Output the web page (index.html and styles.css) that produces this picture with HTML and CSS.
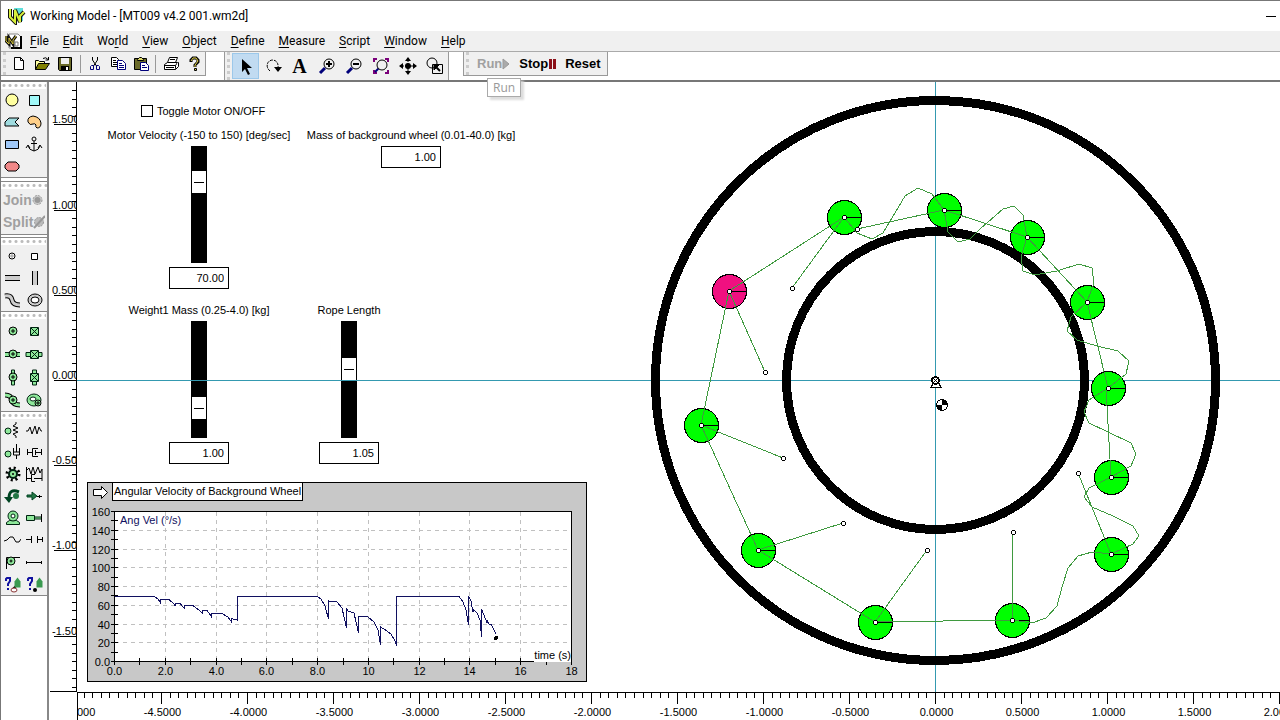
FILE: index.html
```html
<!DOCTYPE html>
<html lang="en">
<head>
  <meta charset="UTF-8">
  <meta name="viewport" content="width=device-width, initial-scale=1.0">
  <title>Working Model - [MT009 v4.2 001.wm2d]</title>
  <link rel="stylesheet" href="styles.css">
</head>
<body>
  <header class="titlebar">
    <svg class="logo" width="18" height="18" viewBox="0 0 18 18">
      <path d="M6 1h9v13H8z" fill="#5fe0dc"/>
      <path d="M2 2v8l5 5V3l5 12V9l4-4" fill="none" stroke="#111" stroke-width="4"/>
      <path d="M2 2v8l5 5V3l5 12V9l4-4" fill="none" stroke="#d8f03c" stroke-width="2"/>
    </svg>
    <h1>Working Model - [MT009 v4.2 001.wm2d]</h1>
    <button class="minimize" aria-label="Minimize"></button>
  </header>

  <nav class="menubar">
    <svg class="doc-icon" width="18" height="18" viewBox="0 0 18 18">
      <path d="M4 2h9l3 3v11H4z" fill="#fff" stroke="#888"/>
      <path d="M16 4v12H6" fill="none" stroke="#000" stroke-width="2"/>
      <path d="M1 4v5l3 3V6l4 6V8l3-4" fill="none" stroke="#111" stroke-width="3"/>
      <path d="M1 4v5l3 3V6l4 6V8l3-4" fill="none" stroke="#d8c93c"/>
      <path d="M10 10h3v4h-3z" fill="none" stroke="#777"/>
    </svg>
    <a href="#"><u>F</u>ile</a>
    <a href="#"><u>E</u>dit</a>
    <a href="#">Wo<u>r</u>ld</a>
    <a href="#"><u>V</u>iew</a>
    <a href="#"><u>O</u>bject</a>
    <a href="#"><u>D</u>efine</a>
    <a href="#"><u>M</u>easure</a>
    <a href="#"><u>S</u>cript</a>
    <a href="#"><u>W</u>indow</a>
    <a href="#"><u>H</u>elp</a>
  </nav>

  <div class="toolbars">
    <div class="toolbar file-tools">
      <span class="grip"></span>
      <button aria-label="New"><svg width="16" height="16" viewBox="0 0 16 16"><path d="M3.500 1.500h6l3 3v9h-9zM9.500 1.500v3h3" fill="#fff" stroke="#000"/></svg></button>
      <button aria-label="Open"><svg width="16" height="16" viewBox="0 0 16 16"><path d="M1.500 13.500v-9h3l1 1h5v2" fill="#ffffa0" stroke="#000"/><path d="M1.500 13.500l3-6h11l-4 6z" fill="#808000" stroke="#000"/><path d="M9 2.500q3-2 5 1M14.500 1v3h-3" fill="none" stroke="#000"/></svg></button>
      <button aria-label="Save"><svg width="16" height="16" viewBox="0 0 16 16"><path d="M1.500 1.500h13v13h-12l-1-1z" fill="#6b6b2a" stroke="#000"/><path d="M4 2h8v6H4z" fill="#eee"/><path d="M4 10h8v4H4z" fill="#000"/><path d="M9 11h2v3H9z" fill="#fff"/></svg></button>
      <span class="divider"></span>
      <button aria-label="Cut"><svg width="16" height="16" viewBox="0 0 16 16" fill="none"><path d="M5.500 1v3l4 6M10.500 1v3l-4 6" stroke="#000"/><path d="M4.500 9.500h2v4h-3v-3zM9.500 9.500h2l1 1v3h-3z" stroke="#00007a"/></svg></button>
      <button aria-label="Copy"><svg width="16" height="16" viewBox="0 0 16 16"><path d="M1.500 1.500h5l2 2v7h-7z" fill="#fff" stroke="#000"/><path d="M3 4.500h3M3 6.500h4M3 8.500h4" stroke="#000"/><path d="M7.500 4.500h5l3 3v6h-8z" fill="#fff" stroke="#00007a"/><path d="M9 7.500h3M9 9.500h5M9 11.500h5" stroke="#00007a"/></svg></button>
      <button aria-label="Paste"><svg width="16" height="16" viewBox="0 0 16 16"><path d="M1.500 2.500h12v11h-12z" fill="#6b6b2a" stroke="#000"/><path d="M4.500 3.500l2-2h2l2 2v1h-6z" fill="#ddd96a" stroke="#000"/><path d="M7.500 6.500h5l3 3v5h-8z" fill="#fff" stroke="#00007a"/><path d="M9 9.500h3M9 11.500h5" stroke="#00007a"/></svg></button>
      <span class="divider"></span>
      <button aria-label="Print"><svg width="16" height="16" viewBox="0 0 16 16" fill="#fff" stroke="#000"><path d="M4.500 6.500l2-5h8l-2 5z"/><path d="M1.500 8.500l3-2h10l-2 3v4h-11z"/><path d="M12.500 13.500l3-3v-4h-1M1.500 9.500h11M3 11.500h8M7 3.500h5"/></svg></button>
      <button aria-label="Help"><svg width="16" height="16" viewBox="0 0 16 16" fill="none"><path d="M5 6V4l2-2h3l2 2v2L9 9v2" stroke="#000" stroke-width="3"/><path d="M5 5l2-3h3l2 3-3 4v2" stroke="#e8d84c"/><path d="M8.500 12.500h2v2h-2z" fill="#e8d84c" stroke="#000"/></svg></button>
    </div>

    <div class="toolbar edit-tools">
      <span class="grip"></span>
      <button class="active" aria-label="Select"><svg width="20" height="20" viewBox="0 0 20 20"><path d="M6 3v13l3-3 3 6 2-1-3-6h5z" fill="#000"/></svg></button>
      <button aria-label="Rotate"><svg width="20" height="20" viewBox="0 0 20 20"><path d="M7 15C2 11 4 4 10 4q6 1 5 9" fill="none" stroke="#000" stroke-dasharray="3 1"/><path d="M11 11h8l-4 5z" fill="#000"/></svg></button>
      <button class="text-tool" aria-label="Text">A</button>
      <button aria-label="Zoom in"><svg width="20" height="20" viewBox="0 0 20 20"><path d="M3 17l5-5" stroke="#00007a" stroke-width="3"/><circle cx="12" cy="8" r="5" fill="#f0f0f0" stroke="#000"/><path d="M9 8h6M12 5v6" stroke="#000" stroke-width="2"/></svg></button>
      <button aria-label="Zoom out"><svg width="20" height="20" viewBox="0 0 20 20"><path d="M3 17l5-5" stroke="#00007a" stroke-width="3"/><circle cx="12" cy="8" r="5" fill="#f0f0f0" stroke="#000"/><path d="M9 8h6" stroke="#000" stroke-width="2"/></svg></button>
      <button aria-label="Zoom to extent"><svg width="20" height="20" viewBox="0 0 20 20"><path d="M3 6V3h3M14 3h3v3M17 14v3h-3M6 17H3v-3" fill="none" stroke="#7a007a" stroke-width="2"/><path d="M4 16l4-4" stroke="#00007a" stroke-width="2"/><circle cx="11" cy="9" r="5" fill="#f0f0f0" stroke="#000"/></svg></button>
      <button aria-label="Pan"><svg width="20" height="20" viewBox="0 0 20 20"><circle cx="10" cy="10" r="3"/><path d="M10 1l3 4H7zM10 19l3-4H7zM1 10l4-3v6zM19 10l-4-3v6z"/><path d="M2 10h16M10 2v16" stroke="#000" stroke-dasharray="4 1"/></svg></button>
      <button aria-label="Objects"><svg width="20" height="20" viewBox="0 0 20 20" fill="none" stroke="#000"><circle cx="7" cy="7" r="5"/><path d="M7.500 8.500h10v9h-10z"/><path d="M10 10l5 5" stroke-width="2"/><path d="M9 9h5l-5 5z" fill="#000"/></svg></button>
    </div>

    <div class="toolbar run-tools">
      <span class="grip"></span>
      <button class="run" disabled>Run<svg width="9" height="12" viewBox="0 0 9 12"><path d="M1 1l6 5-6 5z" fill="#aaa" stroke="#999"/></svg></button>
      <button>Stop<svg width="9" height="12" viewBox="0 0 9 12"><path d="M1 1h3v10H1zM5 1h3v10H5z" fill="#8c1018"/></svg></button>
      <button>Reset</button>
      <span class="tooltip">Run</span>
    </div>
  </div>

  <div class="main">
    <aside class="toolbox">
      <section class="tools bodies">
        <button aria-label="Circle"><svg width="18" height="18" viewBox="0 0 18 18"><circle cx="9" cy="9" r="6" fill="#ffffa0" stroke="#000"/></svg></button>
        <button aria-label="Square"><svg width="18" height="18" viewBox="0 0 18 18"><path d="M4.500 4.500h10v10h-10z" fill="#a0f8f8" stroke="#000"/></svg></button>
        <button aria-label="Polygon"><svg width="18" height="18" viewBox="0 0 18 18"><path d="M2 13V9l4-4h10l-4 4 4 4z" fill="#a0dce0" stroke="#000"/></svg></button>
        <button aria-label="Curved body"><svg width="18" height="18" viewBox="0 0 18 18"><path d="M3 9q-1-5 5-6 7 1 8 7 0 5-4 5-2-1-1-3-1-2-3-1-3 2-5-2z" fill="#ffd08a" stroke="#000"/></svg></button>
        <button aria-label="Rectangle"><svg width="18" height="18" viewBox="0 0 18 18"><path d="M2.500 5.500h13v8h-13z" fill="#a0c8f8" stroke="#000"/></svg></button>
        <button aria-label="Anchor"><svg width="18" height="18" viewBox="0 0 18 18" fill="none" stroke="#000"><circle cx="9" cy="4" r="2"/><path d="M9 6v10M6 8.500h6M3 11q1 4 6 5 5-1 6-5M1 13l2-3 2 3M13 13l2-3 2 3"/></svg></button>
        <button aria-label="Rounded body"><svg width="18" height="18" viewBox="0 0 18 18"><path d="M5 5h8l3 3v3l-3 3H5l-3-3V8z" fill="#f08888" stroke="#000"/></svg></button>
      </section>

      <section class="join-split">
        <button disabled>Join<svg width="11" height="12" viewBox="0 0 11 12"><circle cx="5.500" cy="6" r="4.500" fill="#ccc" stroke="#999" stroke-dasharray="2 1"/><circle cx="5.500" cy="6" r="3" fill="#999"/></svg></button>
        <button disabled>Split<svg width="12" height="14" viewBox="0 0 12 14"><circle cx="6" cy="7" r="4.500" fill="#bbb" stroke="#999" stroke-dasharray="2 1"/><path d="M1 13L12 1" stroke="#999" stroke-width="2"/></svg></button>
      </section>

      <section class="tools points">
        <button aria-label="Point"><svg width="18" height="18" viewBox="0 0 18 18"><circle cx="9" cy="9" r="3" fill="#fff" stroke="#000"/><path d="M7 9h4M9 7v4" stroke="#999"/></svg></button>
        <button aria-label="Square point"><svg width="18" height="18" viewBox="0 0 18 18"><path d="M6.500 6.500h6v6h-6z" fill="#fff" stroke="#000"/></svg></button>
        <button aria-label="Horizontal slot"><svg width="18" height="18" viewBox="0 0 18 18"><path d="M2 7h15v4H2z" fill="#ccc"/><path d="M2 6.500h15M2 11.500h15" stroke="#000"/></svg></button>
        <button aria-label="Vertical slot"><svg width="18" height="18" viewBox="0 0 18 18"><path d="M8 2h4v14H8z" fill="#ccc"/><path d="M7.500 2v14M12.500 2v14" stroke="#000"/></svg></button>
        <button aria-label="Curved slot"><svg width="18" height="18" viewBox="0 0 18 18" fill="none"><path d="M2 5q6-1 7 4 1 5 8 5" stroke="#000" stroke-width="5"/><path d="M2 5q6-1 7 4 1 5 8 5" stroke="#ccc" stroke-width="3"/></svg></button>
        <button aria-label="Closed slot"><svg width="18" height="18" viewBox="0 0 18 18"><ellipse cx="10" cy="9" rx="7" ry="6" fill="#ccc" stroke="#000"/><ellipse cx="10" cy="9" rx="4" ry="3" fill="#fff" stroke="#000"/></svg></button>
      </section>

      <section class="tools joints">
        <button aria-label="Pin joint"><svg width="18" height="18" viewBox="0 0 18 18"><circle cx="10" cy="9" r="4" fill="#8ee89a" stroke="#000"/><path d="M8 9h4M10 7v4" stroke="#000"/></svg></button>
        <button aria-label="Rigid joint"><svg width="18" height="18" viewBox="0 0 18 18"><path d="M5.500 5.500h8v8h-8zM6 6l7 7M13 6l-7 7" fill="#8ee89a" stroke="#021"/></svg></button>
        <button aria-label="Horizontal slot joint"><svg width="18" height="18" viewBox="0 0 18 18"><path d="M2 7.500h15M2 11.500h15" stroke="#021"/><path d="M2 8h15v3H2z" fill="#8ee89a"/><circle cx="10" cy="9" r="4" fill="#8ee89a" stroke="#000"/><path d="M8 9h4M10 7v4" stroke="#000"/></svg></button>
        <button aria-label="Keyed horizontal slot"><svg width="18" height="18" viewBox="0 0 18 18"><path d="M1 7.500h16v4H1z" fill="#8ee89a" stroke="#021"/><path d="M5.500 5.500h8v8h-8zM6 6l7 7M13 6l-7 7" fill="#8ee89a" stroke="#021"/></svg></button>
        <button aria-label="Vertical slot joint"><svg width="18" height="18" viewBox="0 0 18 18"><path d="M8.500 2v15h3V2z" fill="#8ee89a" stroke="#021"/><circle cx="10" cy="9" r="4" fill="#8ee89a" stroke="#000"/><path d="M8 9h4M10 7v4" stroke="#000"/></svg></button>
        <button aria-label="Keyed vertical slot"><svg width="18" height="18" viewBox="0 0 18 18"><path d="M7.500 2h4v15h-4z" fill="#8ee89a" stroke="#021"/><path d="M5.500 5.500h8v8h-8zM6 6l7 7M13 6l-7 7" fill="#8ee89a" stroke="#021"/></svg></button>
        <button aria-label="Curved slot joint"><svg width="18" height="18" viewBox="0 0 18 18" fill="none"><path d="M2 4q6 0 7 5 1 5 8 5" stroke="#000" stroke-width="5"/><path d="M2 4q6 0 7 5 1 5 8 5" stroke="#8ee89a" stroke-width="3"/><circle cx="10" cy="9" r="4" fill="#8ee89a" stroke="#000"/><path d="M8 9h4M10 7v4" stroke="#000"/></svg></button>
        <button aria-label="Closed slot joint"><svg width="18" height="18" viewBox="0 0 18 18"><ellipse cx="9" cy="9" rx="7" ry="6" fill="#8ee89a" stroke="#021"/><ellipse cx="8" cy="8" rx="3" ry="2" fill="#fff" stroke="#021"/><circle cx="13" cy="12" r="3" fill="#8ee89a" stroke="#000"/><path d="M11 12h4M13 10v4" stroke="#000"/></svg></button>
      </section>

      <section class="tools constraints">
        <button aria-label="Rotational spring"><svg width="18" height="18" viewBox="0 0 18 18" fill="none" stroke="#000"><circle cx="5" cy="10" r="3" fill="#8ee89a" stroke="#021"/><path d="M13 1v2l-3 2 5 2-5 2 5 2-5 2 3 2v2"/></svg></button>
        <button aria-label="Spring"><svg width="18" height="18" viewBox="0 0 18 18" fill="none" stroke="#000"><path d="M1 10h2l2-4 2 7 3-8 2 8 2-7 2 4h1"/></svg></button>
        <button aria-label="Rotational damper"><svg width="18" height="18" viewBox="0 0 18 18" fill="none" stroke="#000"><circle cx="5" cy="11" r="3" fill="#8ee89a" stroke="#021"/><path d="M13.500 1v8M11 9h5M10.500 5v7h6V5M13.500 12v4"/></svg></button>
        <button aria-label="Damper"><svg width="18" height="18" viewBox="0 0 18 18" fill="none" stroke="#000"><path d="M2.500 6v6M2 9.500h5M13 5.500H7.500v8H13M10.500 7v5M10 9.500h6M16.500 6v6"/></svg></button>
        <button aria-label="Gear"><svg width="18" height="18" viewBox="0 0 18 18"><circle cx="10" cy="9" r="6" fill="none" stroke="#000" stroke-width="3" stroke-dasharray="2 2.700"/><circle cx="10" cy="9" r="4" fill="#8ee89a" stroke="#021" stroke-width="2"/><circle cx="10" cy="9" r="1"/></svg></button>
        <button aria-label="Spring damper"><svg width="18" height="18" viewBox="0 0 18 18" fill="none" stroke="#000"><path d="M1.500 2v14M1 6l3-3 2 6 2-7 2 7 3-7 2 6 2-4v12M2 13.500h4M10 9.500H6.500v7H10M9 13.500h8"/></svg></button>
        <button aria-label="Torque"><svg width="18" height="18" viewBox="0 0 18 18"><path d="M16 5Q6 1 6 11" fill="none" stroke="#042" stroke-width="3"/><path d="M1 10h9l-4 6z" fill="#042"/><circle cx="13" cy="9" r="3" fill="#274"/></svg></button>
        <button aria-label="Force"><svg width="18" height="18" viewBox="0 0 18 18"><path d="M2 8h5V5l5 4-5 4v-3H2z" fill="#274" stroke="#042"/><path d="M12 9.500h5M14.500 8v3" stroke="#000"/></svg></button>
        <button aria-label="Motor"><svg width="18" height="18" viewBox="0 0 18 18"><path d="M3.500 15.500v-2l3-2h7l3 2v2z" fill="#8ee89a" stroke="#021"/><circle cx="10" cy="7" r="5" fill="#8ee89a" stroke="#021"/><circle cx="10" cy="7" r="2" fill="#fff" stroke="#021"/></svg></button>
        <button aria-label="Actuator"><svg width="18" height="18" viewBox="0 0 18 18"><path d="M1.500 6.500h8v5h-8zM9.500 8h7v2h-7z" fill="#8ee89a" stroke="#021"/><path d="M16.500 5v8" stroke="#000"/></svg></button>
        <button aria-label="Rope"><svg width="18" height="18" viewBox="0 0 18 18" fill="none" stroke="#000"><path d="M1 10l3-1 3-3h3l3 5h3l2-3"/></svg></button>
        <button aria-label="Separator"><svg width="18" height="18" viewBox="0 0 18 18" fill="none" stroke="#000"><path d="M1 8.500h5M6.500 5v7M12.500 5v7M12 8.500h5M17.500 6v5"/></svg></button>
        <button aria-label="Pulley"><svg width="18" height="18" viewBox="0 0 18 18" fill="none" stroke="#000"><path d="M3.500 16V4.500H17"/><circle cx="8" cy="8" r="4" fill="#8ee89a"/><circle cx="8" cy="8" r="1"/></svg></button>
        <button aria-label="Rod"><svg width="18" height="18" viewBox="0 0 18 18" fill="none" stroke="#000"><path d="M1 9.500h16M1.500 8v3M16.500 8v3"/></svg></button>
        <button aria-label="Time control"><svg width="18" height="18" viewBox="0 0 18 18"><path d="M3 6V4l1-1h3v3L5 9v2M5 13v2" fill="none" stroke="#1010a0" stroke-width="2"/><path d="M10 14l5-5" stroke="#000" stroke-width="2"/><path d="M11.500 6.500l3-4 3 4v6h-6z" fill="#3a9a50"/><ellipse cx="11" cy="15" rx="3" ry="2" fill="#fff" stroke="#833"/></svg></button>
        <button aria-label="Point control"><svg width="18" height="18" viewBox="0 0 18 18"><path d="M3 6V4l1-1h3v3L5 9v2M5 13v2" fill="none" stroke="#1010a0" stroke-width="2"/><path d="M11.500 6.500l3-4 3 4v6h-6z" fill="#3a9a50"/><circle cx="10" cy="15" r="2"/></svg></button>
      </section>
    </aside>

    <div class="document">
      <svg class="ruler-y" id="rulerY"></svg>
      <div class="canvas">
        <label class="toggle"><input type="checkbox">Toggle Motor ON/OFF</label>

        <div class="control motor">
          <label for="motor">Motor Velocity (-150 to 150) [deg/sec]</label>
          <input type="range" id="motor" min="-150" max="150" value="70">
          <input type="text" aria-label="Motor velocity value" value="70.00">
        </div>
        <div class="control wheel-mass">
          <label for="wheelMass">Mass of background wheel (0.01-40.0) [kg]</label>
          <input type="text" id="wheelMass" value="1.00">
        </div>
        <div class="control weight">
          <label for="weight">Weight1 Mass (0.25-4.0) [kg]</label>
          <input type="range" id="weight" min="0.25" max="4" step="0.01" value="1">
          <input type="text" aria-label="Weight value" value="1.00">
        </div>
        <div class="control rope">
          <label for="rope">Rope Length</label>
          <input type="range" id="rope" min="0.05" max="1.7" step="0.01" value="1.05">
          <input type="text" aria-label="Rope length value" value="1.05">
        </div>

        <div class="graph">
          <div class="graph-head">
            <svg width="18" height="14" viewBox="0 0 18 14"><path d="M1.500 4.500h8v-3l6 6-6 6v-3h-8z" fill="#fff" stroke="#000"/></svg>
            <h2>Angular Velocity of Background Wheel</h2>
          </div>
          <svg id="plot" width="498" height="180" viewBox="88 501 498 180">
            <rect x="114.500" y="511.500" width="457" height="150" fill="#fff" stroke="#000"/>
            <g id="plotGrid"></g>
            <path class="curve" d="M115 596.500H154L158 599L160 602V599.500H169L174 604L175 606V603.500H180L184 608V605.500H193L200 611L202 613V610.500H207L211 616V613L222 613.500L228 617L231 621V618.500L237.500 620V596.500H317L321 599L325 606L328.500 619V601L337 602L342 608L346.500 628V609L348 611L354 613L358.500 633V616H367L374 622L378 630L380.500 645V627L384 629L391 634L395 641L396.500 646V596.500H459L463 602L466 610L468.500 625V596L471 601L473 612V609L477 613L480 620L481.500 637V609L484 615L487 623V620L489 624H491L496 634"/>
            <circle cx="496" cy="638" r="2"/>
            <text class="series" x="120" y="524">Ang Vel (°/s)</text>
            <rect x="534" y="649" width="37" height="13" fill="#fff"/>
            <text class="unit" x="571" y="659">time (s)</text>
          </svg>
        </div>

        <svg class="scene" width="1203" height="610" viewBox="77 82 1203 610">
          <path class="axes" d="M77 380.500H4000M935.500 82V4000"/>
          <circle class="wheel" cx="935.500" cy="380.500" r="280"/>
          <circle class="wheel" cx="935.500" cy="380.500" r="149"/>
          <g id="balls"></g>
          <g class="ropes">
            <path d="M792 288L844 217L729 291L765 372M729 291L701 425L783 458M701 425L758 550L843 523M758 550L875 622L927 550M875 622L1012 620L1013 532M1078 473L1111 554"/>
            <path d="M857 229L944 210L1027 237L1087 302L1108 388M1106 388L1111 477"/>
            <path d="M844 217L857 233L872 239L883 233L889 223L905 196L918 188L932 194L944 210L948 232L958 242L970 239L980 229L1003 209L1014 206L1023 215L1027 237"/>
            <path d="M1027 237L1021 257L1023 271L1035 275L1057 271L1079 264L1092 268L1094 283L1087 302L1071 317L1067 331L1077 340L1097 346L1118 351L1129 361L1126 374L1108 388"/>
            <path d="M1108 388L1089 400L1084 412L1089 423L1108 432L1131 443L1136 454L1131 466L1111 477L1089 488L1084 497L1092 507L1113 516L1133 526L1139 536L1133 544L1111 554"/>
            <path d="M1111 554L1092 552L1078 556L1068 568L1062 587L1057 606L1046 618L1032 623L1012 620"/>
          </g>
          <g id="pins"></g>
          <path d="M931 387.500h10l-2-4h-6z" fill="#fff" stroke="#000"/>
          <circle cx="935.500" cy="380.500" r="3.500" fill="#fff" stroke="#000" stroke-width="2"/>
          <path d="M934 379l3 3M937 379l-3 3" stroke="#000"/>
          <circle cx="942" cy="405" r="5.500" fill="#fff" stroke="#000"/>
          <path d="M942 405v-6a6 6 0 0 1 6 6zM942 405v6a6 6 0 0 1-6-6z"/>
        </svg>
      </div>
      <svg class="ruler-x" id="rulerX"></svg>
    </div>
  </div>

  <script src="script.js"></script>
</body>
</html>
```

FILE: styles.css
```css
* {
  box-sizing: border-box;
}
body {
  margin: 0;
  height: 100vh;
  display: flex;
  flex-direction: column;
  overflow: hidden;
  background: #fff;
  border-top: 1px solid #777;
  border-left: 1px solid #777;
  font-family: "Liberation Sans", Arial, sans-serif;
  font-size: 11px;
  color: #000;
}
button {
  display: flex;
  align-items: center;
  justify-content: center;
  padding: 0;
  border: none;
  background: none;
  font-family: inherit;
  color: inherit;
}
button svg {
  flex: none;
}

/* title and menu */
.titlebar {
  display: flex;
  align-items: center;
  height: 30px;
  padding-left: 7px;
}
.titlebar h1 {
  margin: 0 auto 0 4px;
  font: 12px Roboto, "Open Sans", sans-serif;
}
.minimize {
  width: 10px;
  height: 1px;
  margin-right: 4px;
  background: #000;
}
.menubar {
  display: flex;
  align-items: center;
  height: 20px;
  padding-left: 4px;
  background: #f0f0f0;
  font: 12px Roboto, "Open Sans", sans-serif;
}
.menubar a {
  padding: 0 7px;
  color: #000;
  text-decoration: none;
}
.menubar a u {
  text-underline-offset: 2px;
}

/* toolbars */
.toolbars {
  display: flex;
  align-items: flex-start;
  height: 31px;
  border-top: 1px solid #aaa;
  border-bottom: 2px solid #777;
}
.toolbar {
  display: flex;
  align-items: center;
  background: #f0f0f0;
  border-right: 1px solid #999;
}
.grip {
  width: 5px;
  align-self: stretch;
  border-left: 3px dotted #ccc;
  margin-left: 2px;
}
.divider {
  width: 1px;
  height: 18px;
  margin: 0 3px;
  background: #999;
}
.file-tools {
  height: 24px;
  width: 205px;
  border-bottom: 1px solid #999;
}
.file-tools button {
  width: 23px;
}
.edit-tools {
  height: 28px;
  margin-left: 18px;
  border-left: 1px solid #999;
}
.edit-tools button {
  width: 27px;
  height: 26px;
}
.edit-tools .active {
  background: #c1dbf1;
  border: 1px solid #9cc8ea;
}
.edit-tools .text-tool {
  font: bold 20px "Liberation Serif", serif;
}
.run-tools {
  position: relative;
  height: 24px;
  margin-left: 14px;
  padding-right: 6px;
  gap: 8px;
  border: solid #999;
  border-width: 0 1px 1px;
}
.run-tools .grip {
  margin-right: -2px;
}
.run-tools button {
  font-size: 13px;
  font-weight: bold;
}
.run-tools .run {
  color: #a0a0a0;
}
.tooltip {
  position: absolute;
  z-index: 2;
  top: 26px;
  left: 23px;
  padding: 0 5px;
  line-height: 17px;
  border: 1px solid #aaa;
  background: #fff;
  box-shadow: 3px 3px 2px #ddd;
  color: #999;
  font-family: "Open Sans", sans-serif;
  font-size: 12px;
}

/* toolbox */
.main {
  flex: 1;
  display: flex;
  min-height: 0;
}
.toolbox {
  flex: none;
  width: 48px;
  border-right: 2px solid #888;
}
.toolbox section {
  background: #f0f0f0;
  border-bottom: 1px solid #888;
}
.toolbox section::before {
  content: "";
  grid-column: span 2;
  display: block;
  height: 7px;
  background: #fff;
  background-image: radial-gradient(circle, #bbb 1px, transparent 2px);
  background-size: 6px 7px;
}
.tools {
  display: grid;
  grid-template-columns: 21px 24px;
  grid-auto-rows: 22px;
  grid-template-rows: 7px;
}
.bodies {
  margin-bottom: 4px;
  box-shadow: 0 3px #fff, 0 4px #888;
}
.join-split {
  margin-bottom: 3px;
  padding-bottom: 1px;
  box-shadow: 0 2px #fff, 0 3px #888;
}
.join-split button {
  height: 22px;
  padding-left: 2px;
  font-size: 14px;
  font-weight: bold;
  color: #a0a0a0;
}
.joints {
  grid-auto-rows: 23px;
}

/* document */
.document {
  flex: 1;
  min-width: 0;
  display: grid;
  grid-template-columns: 28px 1fr;
  grid-template-rows: 1fr 28px;
}
.ruler-y, .ruler-x {
  width: 100%;
  height: 100%;
  font-size: 11px;
}
.ruler-x {
  grid-column: 2;
}
.ruler-y path, .ruler-x path {
  stroke: #000;
  fill: none;
}
.canvas {
  position: relative;
  overflow: hidden;
}
.scene {
  position: absolute;
  top: 0;
  left: 0;
  overflow: visible;
  pointer-events: none;
  shape-rendering: crispEdges;
}
.axes {
  fill: none;
  stroke: #3499b0;
}
.wheel {
  fill: none;
  stroke: #000;
  stroke-width: 9px;
}
.ropes {
  fill: none;
  stroke: #3f9a3f;
}

/* controls lying on the canvas */
.toggle {
  position: absolute;
  top: 23px;
  left: 64px;
  display: flex;
  align-items: center;
  gap: 4px;
}
.toggle input {
  appearance: none;
  width: 12px;
  height: 12px;
  margin: 0;
  border: 1px solid #000;
}
.toggle input:checked {
  background: #000;
}
.control {
  position: absolute;
  display: flex;
  flex-direction: column;
  align-items: center;
  width: 240px;
  line-height: 13px;
}
.motor {
  top: 47px;
  left: 2px;
}
.wheel-mass {
  top: 47px;
  left: 214px;
}
.weight {
  top: 222px;
  left: 2px;
}
.rope {
  top: 222px;
  left: 152px;
}
.control input[type="text"] {
  width: 60px;
  height: 22px;
  margin: 4px 0 0;
  padding: 0 4px;
  border: 1px solid #000;
  font: inherit;
  text-align: right;
}
.control input[type="range"] {
  appearance: none;
  writing-mode: vertical-lr;
  direction: rtl;
  width: 16px;
  height: 117px;
  margin: 4px 0 0;
  background: #000;
}
.control input[type="range"]::-webkit-slider-thumb {
  appearance: none;
  width: 14px;
  height: 22px;
  background: linear-gradient(#000, #000) center / 10px 1px no-repeat #fff;
}

/* graph */
.graph {
  position: absolute;
  top: 400px;
  left: 10px;
  width: 500px;
  border: 1px solid #000;
  background: #c8c8c8;
}
.graph svg {
  display: block;
}
#plot {
  shape-rendering: crispEdges;
}
.graph-head {
  display: flex;
  align-items: center;
  height: 18px;
  padding-left: 4px;
  gap: 2px;
}
.graph-head h2 {
  margin: 0;
  padding: 0 1px;
  border: solid #000;
  border-width: 0 1px 1px;
  background: #fff;
  font-size: 11px;
  font-weight: normal;
  line-height: 17px;
}
.graph text {
  font-size: 11px;
}
.graph .ylabel, .graph .unit {
  text-anchor: end;
}
.graph .xlabel {
  text-anchor: middle;
}
.graph .series {
  fill: #101060;
}
.grid {
  stroke: #c0c0c0;
  stroke-dasharray: 4 4;
}
.tick {
  stroke: #000;
}
.curve {
  fill: none;
  stroke: #101060;
}
```

FILE: script.js
```javascript
const balls = [
  [729, 291], [844, 217], [944, 210], [1027, 237], [1087, 302], [1108, 388],
  [1111, 477], [1111, 554], [1012, 620], [875, 622], [758, 550], [701, 425]
];
const pins = [[792, 288], [765, 372], [783, 458], [843, 523], [927, 550], [1013, 532], [1078, 473], [857, 229]];

function drawBalls() {
  let html = '';
  balls.forEach(([x, y], i) => {
    const fill = i === 0 ? '#f01080' : '#00ff00';
    html += `<circle cx="${x + 0.5}" cy="${y + 0.5}" r="17" fill="${fill}" stroke="#000"/>`;
    html += `<path d="M${x} ${y + 0.5}h18" stroke="#000"/>`;
  });
  document.getElementById('balls').innerHTML = html;

  document.getElementById('pins').innerHTML = balls.concat(pins).map(([x, y]) =>
    `<circle cx="${x + 0.5}" cy="${y + 0.5}" r="2" fill="#fff" stroke="#000"/>`).join('');
}

function drawPlotGrid() {
  let html = '';
  for (let v = 0; v <= 160; v += 10) {
    const y = Math.round(661 - v * 150 / 160) + 0.5;
    if (v % 20 === 0) {
      if (v > 0 && v < 160) html += `<path class="grid" d="M115 ${y}H571"/>`;
      html += `<text class="ylabel" x="110" y="${y + 4}">${v === 0 ? '0.0' : v}</text>`;
    }
    html += `<path class="tick" d="M111 ${y}h7"/>`;
  }
  for (let t = 0; t <= 18; t++) {
    const x = Math.round(114 + t * 457 / 18) + 0.5;
    if (t % 2 === 0) {
      if (t > 0 && t < 18) html += `<path class="grid" d="M${x} 512V661"/>`;
      html += `<text class="xlabel" x="${x}" y="675">${t < 10 ? t.toFixed(1) : t}</text>`;
    }
    html += `<path class="tick" d="M${x} 658v7"/>`;
  }
  document.getElementById('plotGrid').innerHTML = html;
}

// both rulers have ten ticks for every half metre
function drawRulers() {
  const rulerY = document.getElementById('rulerY');
  const rulerX = document.getElementById('rulerX');

  let y = '<path d="M27.5 0V610M1 609.5H28"/>';
  for (let i = -36; i <= 34; i++) {
    const py = Math.round(298 - i * 8.52) + 0.5;
    if (i % 10 === 0) {
      y += `<path d="M5 ${py}h23"/><text x="3" y="${py - 2}">${(i / 20).toFixed(3)}</text>`;
    } else {
      y += `<path d="M23 ${py}h5"/>`;
    }
  }
  rulerY.innerHTML = y;

  let x = '<path d="M0 0.5H4000M0.5 0V28"/>';
  for (let i = -99; 858 + i * 8.6 < rulerX.clientWidth; i++) {
    const px = Math.round(858 + i * 8.6) + 0.5;
    if (i % 10 === 0) {
      x += `<path d="M${px} 0v12"/><text x="${px + 1}" y="24" text-anchor="middle">${(i / 20).toFixed(4)}</text>`;
    } else {
      x += `<path d="M${px} 0v6"/>`;
    }
  }
  x += '<text x="0" y="24">000</text>';
  rulerX.innerHTML = x;
}

drawBalls();
drawPlotGrid();
drawRulers();
```
